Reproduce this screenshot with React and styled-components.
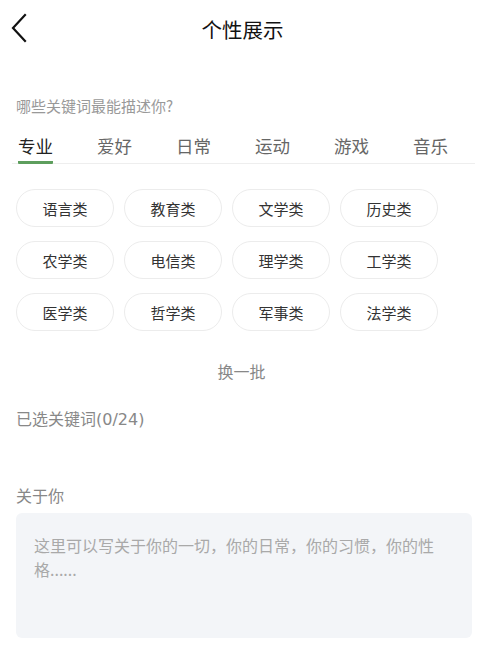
import React from "react";
import styled, { createGlobalStyle } from "styled-components";

const Global = createGlobalStyle`
  html, body { margin: 0; padding: 0; background: #fff; }
  body { font-family: "Noto Sans CJK SC", "Noto Sans", sans-serif; }
  * { box-sizing: border-box; }
`;

const Page = styled.div`
  width: 483px;
  min-height: 657px;
  background: #fff;
  display: flex;
  flex-direction: column;
`;

const Header = styled.header`
  height: 58px;
  display: grid;
  grid-template-columns: 60px 1fr 60px;
  align-items: center;
`;

const BackButton = styled.button`
  border: none;
  background: none;
  padding: 0 0 2px 10px;
  height: 58px;
  display: flex;
  align-items: center;
  cursor: pointer;
`;

const Title = styled.h1`
  margin: 0;
  text-align: center;
  font-size: 20.5px;
  font-weight: 400;
  color: #111;
  line-height: 28px;
  padding-left: 2px;
`;

const Label = styled.div`
  margin: ${(p) => p.$mt}px 0 0 16px;
  font-family: ${(p) => (p.$wideLatin ? '"DejaVu Sans", "Noto Sans CJK SC", sans-serif' : "inherit")};
  font-size: ${(p) => p.$size || 15}px;
  line-height: 21px;
  color: ${(p) => p.$color || "#999"};
`;

const Tabs = styled.div`
  margin: 18px 8px 0 12px;
  padding-left: 6px;
  display: flex;
  gap: 44px;
  border-bottom: 1px solid #eeeeee;
`;

const Tab = styled.div`
  font-size: 17.5px;
  line-height: 24px;
  padding-bottom: 3px;
  margin-bottom: -1px;
  color: ${(p) => (p.$active ? "#222" : "#666")};
  border-bottom: 3px solid ${(p) => (p.$active ? "#5d9e5d" : "transparent")};
  border-radius: 1px;
`;

const ChipGrid = styled.div`
  margin: 25px 0 0 16px;
  display: grid;
  grid-template-columns: repeat(4, 98px);
  column-gap: 10px;
  row-gap: 14px;
`;

const Chip = styled.div`
  height: 38px;
  border: 1px solid #ececec;
  border-radius: 19px;
  display: flex;
  align-items: center;
  justify-content: center;
  font-size: 15px;
  color: #333;
`;

const Refresh = styled.div`
  margin-top: 29px;
  text-align: center;
  font-size: 16px;
  line-height: 22px;
  color: #888;
`;

const TextBox = styled.textarea`
  margin: 7px 11px 0 16px;
  height: 125px;
  border: none;
  border-radius: 6px;
  background: #f3f5f8;
  padding: 20px 26px 18px 18px;
  resize: none;
  font-family: inherit;
  font-size: 16px;
  line-height: 24px;
  color: #333;
  outline: none;
  &::placeholder { color: #a9a9a9; }
`;

const tabs = ["专业", "爱好", "日常", "运动", "游戏", "音乐"];
const chips = [
  "语言类", "教育类", "文学类", "历史类",
  "农学类", "电信类", "理学类", "工学类",
  "医学类", "哲学类", "军事类", "法学类",
];

export default function App() {
  return (
    <Page>
      <Global />
      <Header>
        <BackButton aria-label="返回">
          <svg width="18" height="30" viewBox="0 0 18 30" fill="none">
            <path d="M15 2 L3 15 L15 28" stroke="#111" strokeWidth="2.2" strokeLinecap="square" strokeLinejoin="miter" />
          </svg>
        </BackButton>
        <Title>个性展示</Title>
        <span />
      </Header>
      <Label $mt={37}>哪些关键词最能描述你?</Label>
      <Tabs>
        {tabs.map((t, i) => (
          <Tab key={t} $active={i === 0}>{t}</Tab>
        ))}
      </Tabs>
      <ChipGrid>
        {chips.map((c) => (
          <Chip key={c}>{c}</Chip>
        ))}
      </ChipGrid>
      <Refresh>换一批</Refresh>
      <Label $mt={27} $size={16} $color="#888" $wideLatin>已选关键词(0/24)</Label>
      <Label $mt={55} $size={16} $color="#888">关于你</Label>
      <TextBox placeholder="这里可以写关于你的一切，你的日常，你的习惯，你的性格......" />
    </Page>
  );
}
